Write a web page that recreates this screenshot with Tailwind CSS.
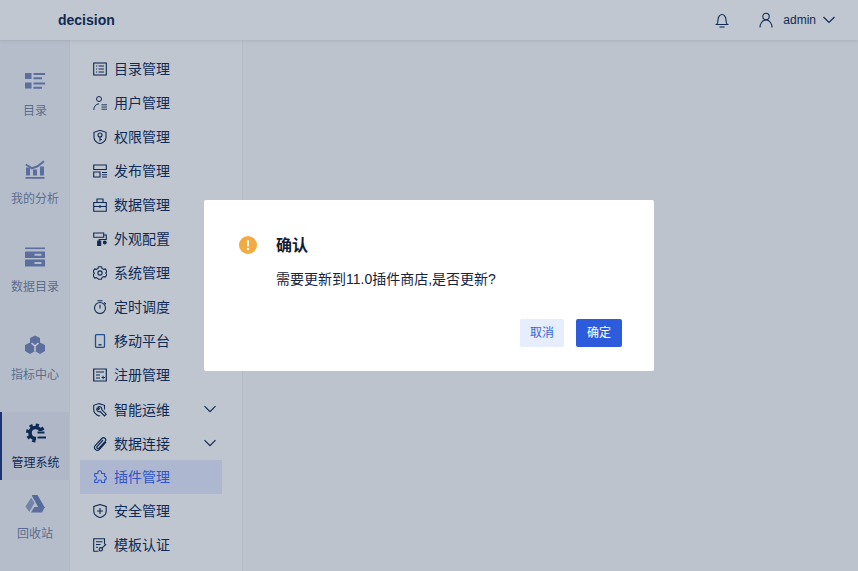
<!DOCTYPE html>
<html lang="zh">
<head>
<meta charset="utf-8">
<script src="https://cdn.jsdelivr.net/npm/@tailwindcss/browser@4"></script>
</head>
<body class="m-0 overflow-hidden">
<div class="relative w-[858px] h-[571px] overflow-hidden flex flex-col bg-[#bcc3cd] text-[#0f2a55] font-['Liberation_Sans','Noto_Sans_CJK_SC',sans-serif]">
  <header class="h-10 shrink-0 flex items-center bg-[#c1c7d0] shadow-[0_1px_3px_rgba(40,50,80,0.12)] relative z-10">
    <span class="ml-[58px] text-sm font-bold text-[#0f2a55]">decision</span>
    <svg class="ml-auto w-4 h-4 text-[#0f2a55]" viewBox="0 0 16 16" fill="none" stroke="currentColor" stroke-width="1.100"><path d="M2.500 12.500c1-.8 1.500-1.800 1.500-4.500C4 5 5.800 2.500 8 2.500S12 5 12 8c0 2.700.5 3.700 1.500 4.500Z"/><path d="M5.500 15h5"/></svg>
    <svg class="ml-[28px] w-4 h-4 text-[#0f2a55]" viewBox="0 0 16 16" fill="none" stroke="currentColor" stroke-width="1.100"><circle cx="8" cy="4.500" r="3.200"/><path d="M2 15.500c0-4 2.500-7.500 6-7.500s6 3.500 6 7.500"/></svg>
    <span class="ml-[9px] text-xs text-[#0f2a55]">admin</span>
    <svg class="ml-[6px] mr-[22px] w-[14px] h-[14px] text-[#0f2a55]" viewBox="0 0 14 14" fill="none" stroke="currentColor" stroke-width="1.200"><path d="M1.500 4 7 9.500 12.500 4"/></svg>
  </header>
  <div class="flex-1 flex min-h-0">
    <nav class="w-[69px] shrink-0 bg-[#b6bdca] pt-5 flex flex-col gap-5 text-xs text-[#5a6d8f]">
      <a class="h-[68px] flex flex-col items-center pl-px">
        <svg class="mt-[11px] w-5 h-5" viewBox="0 0 20 20" fill="#5b6e9d"><path d="M0 2h6.500v6H0zM0 11.500h6.500v6H0z"/><path d="M8.500 2H20v2H8.500zM8.500 6.200H17v2H8.500zM8.500 11.500H20v2H8.500zM8.500 15.700H17v2H8.500z"/></svg>
        <span class="mt-[12px] leading-4">目录</span>
      </a>
      <a class="h-[68px] flex flex-col items-center pl-px">
        <svg class="mt-[11px] w-5 h-5" viewBox="0 0 20 20" fill="#5b6e9d"><path d="M.5 18H19.500v1.800H.5zM1 8.500h4V16.500H1zM8 10.500h4V16.500H8zM15 7.500h4V16.500h-4z"/><path d="M.8 5.500 7 9.300l5.500-2 6.500-5" fill="none" stroke="#5b6e9d" stroke-width="2"/></svg>
        <span class="mt-[12px] leading-4">我的分析</span>
      </a>
      <a class="h-[68px] flex flex-col items-center pl-px">
        <svg class="mt-[11px] w-5 h-5" viewBox="0 0 20 20" fill="#5b6e9d"><path d="M0 .5h20v1.600H0z"/><path fill-rule="evenodd" d="M0 4.500h20V11H0zM9.500 6.700v2h7v-2zM0 12.500h20V19.500H0zM9.500 15v2h7v-2z"/></svg>
        <span class="mt-[12px] leading-4">数据目录</span>
      </a>
      <a class="h-[68px] flex flex-col items-center pl-px">
        <svg class="mt-[11px] w-5 h-5" viewBox="0 0 20 20" fill="#5b6e9d"><path d="M10 .5 15 3v5.500l-5 2.500-5-2.500V3z"/><path d="M5 7.500 10 10v6l-5 3-5-3v-6z"/><path d="M15 7.500 20 10v6l-5 3-5-3v-6z"/><path d="M6.500 8 10 11l3.500-3M10 11v5" fill="none" stroke="#c0c6d2" stroke-width="1.600"/></svg>
        <span class="mt-[12px] leading-4">指标中心</span>
      </a>
      <a class="h-[68px] flex flex-col items-center bg-[#b0b8c7] border-l-2 border-[#1b3573] text-[#0f2a55]">
        <svg class="mt-[11px] w-5 h-5" viewBox="0 0 20 20" fill="none" stroke="#0f2a55"><circle cx="9.500" cy="10" r="5.500" stroke-width="3.600"/><circle cx="9.500" cy="10" r="8" stroke-width="3" stroke-dasharray="3.200 3.080"/><path d="M10 8h10.500v12H10z" fill="#b0b8c7" stroke="none"/><path d="M11.500 9.500h7M11.500 14.500h8.500" stroke-width="2.200"/></svg>
        <span class="mt-[12px] leading-4">管理系统</span>
      </a>
      <a class="-mt-[17px] h-[68px] flex flex-col items-center pl-px">
        <svg class="mt-[11px] w-5 h-5" viewBox="0 0 20 20" fill="#5b6e9d"><path d="M7 1h5.500L20 14h-6.300L7.300 2.500z" fill="#566a9a"/><path d="M6.300 3.500 9.500 9 4.300 18 .5 12.500z" fill="#7484a8"/><path d="M6 18.500 9.300 13h10.500l-2.700 5.500z" fill="#5b6e9d"/></svg>
        <span class="mt-[12px] leading-4">回收站</span>
      </a>
    </nav>
    <aside class="w-[174px] shrink-0 bg-[#c0c6cf] border-l border-r border-[#b4bbc7] pl-[10px] pr-[20px] pt-[12px] flex flex-col text-sm">
      <a class="h-[34px] shrink-0 flex items-center pl-[13px] gap-[7px]"><svg class="w-[14px] h-[14px]" viewBox="0 0 14 14" fill="none" stroke="#0f2a55" stroke-width="1.100"><rect x=".7" y="1" width="12.600" height="12"/><path d="M3 4h1.200M5.500 4H11M3 7h1.200M5.500 7H11M3 10h1.200M5.500 10H11"/></svg><span>目录管理</span></a>
      <a class="h-[34px] shrink-0 flex items-center pl-[13px] gap-[7px]"><svg class="w-[14px] h-[14px]" viewBox="0 0 14 14" fill="none" stroke="#0f2a55" stroke-width="1"><circle cx="6" cy="3" r="2.500"/><path d="M.8 14c0-3.500 2-6 5.200-6.200"/><path d="M8.500 8.800H14M8.500 11H14M8.500 13.200H14" stroke-width=".9"/></svg><span>用户管理</span></a>
      <a class="h-[34px] shrink-0 flex items-center pl-[13px] gap-[7px]"><svg class="w-[14px] h-[14px]" viewBox="0 0 14 14" fill="none" stroke="#0f2a55" stroke-width="1.100"><path d="M7 .3 13 2.300v5.200c0 3-3 5.200-6 6.300-3-1.100-6-3.300-6-6.300V2.300z"/><circle cx="7" cy="5" r="2"/><path d="M7 7v4.300M7 9.500h1.800"/></svg><span>权限管理</span></a>
      <a class="h-[34px] shrink-0 flex items-center pl-[13px] gap-[7px]"><svg class="w-[14px] h-[14px]" viewBox="0 0 14 14" fill="none" stroke="#0f2a55" stroke-width="1.100"><path d="M.7 1h12.600v4.500H.7zM.7 8h6.300v5H.7zM9 8.500h5M9 10.800h5M9 13h5"/></svg><span>发布管理</span></a>
      <a class="h-[34px] shrink-0 flex items-center pl-[13px] gap-[7px]"><svg class="w-[14px] h-[14px]" viewBox="0 0 14 14" fill="none" stroke="#0f2a55" stroke-width="1.100"><path d="M.7 4.500h12.600v8.800H.7zM4 4.500V1h6v3.500M.7 8.500h12.600M7 7v3"/></svg><span>数据管理</span></a>
      <a class="h-[34px] shrink-0 flex items-center pl-[13px] gap-[7px]"><svg class="w-[14px] h-[14px]" viewBox="0 0 14 14" fill="none" stroke="#0f2a55" stroke-width="1.100"><path d="M.7 1h10v4.300H.7zM10.700 3h2.600v4.500H6.200V9"/><path d="M4.700 9h3v5h-3z" fill="#0f2a55"/><circle cx="11.800" cy="10.500" r="1.400" fill="#0f2a55"/></svg><span>外观配置</span></a>
      <a class="h-[34px] shrink-0 flex items-center pl-[13px] gap-[7px]"><svg class="w-[14px] h-[14px]" viewBox="0 0 14 14" fill="none" stroke="#0f2a55" stroke-width="1.100"><path d="M5.500.8h3l.5 1.600 1.700 1 1.700-.4 1.400 2.500L12.700 7l1.100 1.500-1.400 2.500-1.700-.4-1.700 1-.5 1.600h-3L5 12.600l-1.700-1-1.700.4L.2 9.500 1.300 7 .2 5.500 1.600 3l1.700.4 1.700-1z"/><circle cx="7" cy="7" r="2.100"/></svg><span>系统管理</span></a>
      <a class="h-[34px] shrink-0 flex items-center pl-[13px] gap-[7px]"><svg class="w-[14px] h-[14px]" viewBox="0 0 14 14" fill="none" stroke="#0f2a55" stroke-width="1.100"><circle cx="7" cy="8" r="5.500"/><path d="M7 4.800v3.700M4.500.7h5M11.200 2.500l1.600 1.600"/></svg><span>定时调度</span></a>
      <a class="h-[34px] shrink-0 flex items-center pl-[13px] gap-[7px]"><svg class="w-[14px] h-[14px]" viewBox="0 0 14 14" fill="none" stroke="#1f4f8f" stroke-width="1.300"><rect x="2.500" y=".7" width="9" height="12.600" rx=".8"/><path d="M5.500 10.800h3" stroke="#0f2a55"/></svg><span>移动平台</span></a>
      <a class="h-[34px] shrink-0 flex items-center pl-[13px] gap-[7px]"><svg class="w-[14px] h-[14px]" viewBox="0 0 14 14" fill="none" stroke="#0f2a55" stroke-width="1.200"><path d="M.7 1h12.600v12H.7zM3 4h8M3 7h4M3 10h4M8.500 9.500h3.500"/><path d="M10.200 7.700v3.600" stroke="#1f4f8f"/></svg><span>注册管理</span></a>
      <a class="h-[34px] shrink-0 flex items-center pl-[13px] gap-[7px] pt-[2px]"><svg class="w-[14px] h-[14px]" viewBox="0 0 14 14" fill="none" stroke="#0f2a55" stroke-width="1.100"><path d="M11.500 6.500V2.300L6 .6.700 2.300v4.200c0 3 2.500 5.300 5.300 6.400l1-.5"/><path d="M5 4a2.400 2.400 0 0 1 3.700 2.700l4.500 4.500-1.700 1.700L7 8.500A2.400 2.400 0 0 1 4 5.200l1.500 1.200 1-1z"/></svg><span>智能运维</span><svg class="ml-auto mr-[6px] -mt-[2px] w-3 h-3" viewBox="0 0 12 12" fill="none" stroke="#0f2a55" stroke-width="1.200"><path d="M.5 3.200 6 8.700l5.500-5.500"/></svg></a>
      <a class="h-[34px] shrink-0 flex items-center pl-[13px] gap-[7px] pt-[2px]"><svg class="w-[14px] h-[14px]" viewBox="0 0 14 14" fill="none" stroke="#0f2a55" stroke-width="1.200"><path d="M13 5 6.500 12.300a2.800 2.800 0 0 1-4.300-3.600L8.800 1.500a2.200 2.200 0 0 1 3.400 2.800L6 11.200a1.200 1.200 0 0 1-1.900-1.500L10 3"/></svg><span>数据连接</span><svg class="ml-auto mr-[6px] -mt-[2px] w-3 h-3" viewBox="0 0 12 12" fill="none" stroke="#0f2a55" stroke-width="1.200"><path d="M.5 3.200 6 8.700l5.500-5.500"/></svg></a>
      <a class="h-[34px] shrink-0 flex items-center pl-[13px] gap-[7px] bg-[#adb7cf] text-[#2f55c9]"><svg class="w-[14px] h-[14px]" viewBox="0 0 14 14" fill="none" stroke="#2f55c9" stroke-width="1.100"><path d="M4.800 3.500V2.600a1.900 1.900 0 0 1 3.800 0v.9h3v2.800h.3a1.900 1.900 0 0 1 0 3.700h-.3v2.500H8.700v-.6a1.900 1.900 0 0 0-3.800 0v.6H1.700V10h.4a1.900 1.900 0 0 0 0-3.700h-.4V3.500z"/></svg><span>插件管理</span></a>
      <a class="h-[34px] shrink-0 flex items-center pl-[13px] gap-[7px]"><svg class="w-[14px] h-[14px]" viewBox="0 0 14 14" fill="none" stroke="#0f2a55" stroke-width="1.100"><path d="M7 .5 13.200 2.500v5c0 3-3 5-6.200 6.200C3.800 12.500.8 10.500.8 7.500v-5z"/><path d="M4 7h6M7 4v6"/></svg><span>安全管理</span></a>
      <a class="h-[34px] shrink-0 flex items-center pl-[13px] gap-[7px]"><svg class="w-[14px] h-[14px]" viewBox="0 0 14 14" fill="none" stroke="#0f2a55" stroke-width="1.100"><path d="M11.500 6.500V.8H.7v12.400h4.800M3 3.800h6.500M3 6.500h4.500M3 9.200h2"/><circle cx="7.800" cy="11.300" r="1.700"/><path d="M9 10.200l4.200-4"/></svg><span>模板认证</span></a>
    </aside>
    <main class="flex-1"></main>
  </div>
  <div class="absolute left-[204px] top-[200px] w-[450px] h-[171px] bg-white rounded-[2px] z-20 pl-[35px] pr-[32px] pt-[35px] flex flex-col">
    <div class="flex items-center h-5">
      <span class="w-[18px] h-[18px] rounded-full bg-[#f2aa42] flex items-center justify-center"><svg class="w-[18px] h-[18px]" viewBox="0 0 18 18" fill="#fff"><rect x="8" y="4" width="2" height="6.500" rx=".8"/><circle cx="9" cy="13" r="1.200"/></svg></span>
      <span class="ml-[19px] pt-[2px] text-base font-semibold text-[#111c33] leading-5">确认</span>
    </div>
    <p class="mt-[14px] ml-[37px] text-sm leading-[20px] text-[#17233d]">需要更新到11.0插件商店,是否更新?</p>
    <div class="mt-[30px] flex justify-end gap-3">
      <button class="w-11 h-7 rounded-[2px] bg-[#e6edfc] text-xs text-[#3a63d8]">取消</button>
      <button class="w-[46px] h-7 rounded-[2px] bg-[#2c5cdb] text-xs text-white">确定</button>
    </div>
  </div>
</div>
</body>
</html>
